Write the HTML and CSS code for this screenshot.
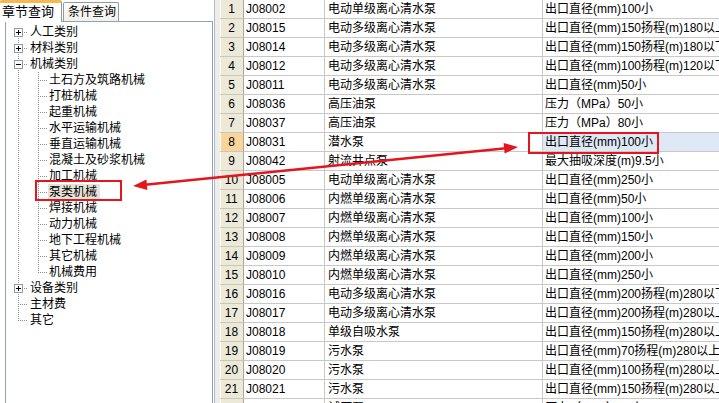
FILE: index.html
```html
<!DOCTYPE html>
<html lang="zh-CN">
<head>
  <meta charset="UTF-8">
  <title>机械类别 - 泵类机械</title>
  <link rel="stylesheet" href="styles.css">
</head>
<body>
  <div class="app">
    <!-- 左侧：章节树 -->
    <div class="side">
      <div class="tabs">
        <div class="tab active">章节查询</div>
        <div class="tab">条件查询</div>
      </div>
      <div class="tree-box">
        <div class="node"><span class="g g1 first"><svg class="exp" width="9" height="9" viewBox="0 0 9 9"><rect x=".5" y=".5" width="8" height="8" fill="#fff" stroke="#919b9c"/><path d="M2 4.5h5M4.5 2v5" stroke="#000"/></svg></span><span class="label">人工类别</span></div>
        <div class="node"><span class="g g1 tee"><svg class="exp" width="9" height="9" viewBox="0 0 9 9"><rect x=".5" y=".5" width="8" height="8" fill="#fff" stroke="#919b9c"/><path d="M2 4.5h5M4.5 2v5" stroke="#000"/></svg></span><span class="label">材料类别</span></div>
        <div class="node"><span class="g g1 tee"><svg class="exp" width="9" height="9" viewBox="0 0 9 9"><rect x=".5" y=".5" width="8" height="8" fill="#fff" stroke="#919b9c"/><path d="M2 4.5h5" stroke="#000"/></svg></span><span class="label">机械类别</span></div>
        <div class="node sub"><span class="g g1 line"></span><span class="g g2 tee"></span><span class="label">土石方及筑路机械</span></div>
        <div class="node sub"><span class="g g1 line"></span><span class="g g2 tee"></span><span class="label">打桩机械</span></div>
        <div class="node sub"><span class="g g1 line"></span><span class="g g2 tee"></span><span class="label">起重机械</span></div>
        <div class="node sub"><span class="g g1 line"></span><span class="g g2 tee"></span><span class="label">水平运输机械</span></div>
        <div class="node sub"><span class="g g1 line"></span><span class="g g2 tee"></span><span class="label">垂直运输机械</span></div>
        <div class="node sub"><span class="g g1 line"></span><span class="g g2 tee"></span><span class="label">混凝土及砂浆机械</span></div>
        <div class="node sub"><span class="g g1 line"></span><span class="g g2 tee"></span><span class="label">加工机械</span></div>
        <div class="node sub"><span class="g g1 line"></span><span class="g g2 tee"></span><span class="label selected">泵类机械</span></div>
        <div class="node sub"><span class="g g1 line"></span><span class="g g2 tee"></span><span class="label">焊接机械</span></div>
        <div class="node sub"><span class="g g1 line"></span><span class="g g2 tee"></span><span class="label">动力机械</span></div>
        <div class="node sub"><span class="g g1 line"></span><span class="g g2 tee"></span><span class="label">地下工程机械</span></div>
        <div class="node sub"><span class="g g1 line"></span><span class="g g2 tee"></span><span class="label">其它机械</span></div>
        <div class="node sub"><span class="g g1 line"></span><span class="g g2 end"></span><span class="label">机械费用</span></div>
        <div class="node"><span class="g g1 tee"><svg class="exp" width="9" height="9" viewBox="0 0 9 9"><rect x=".5" y=".5" width="8" height="8" fill="#fff" stroke="#919b9c"/><path d="M2 4.5h5M4.5 2v5" stroke="#000"/></svg></span><span class="label">设备类别</span></div>
        <div class="node"><span class="g g1 tee"></span><span class="label">主材费</span></div>
        <div class="node"><span class="g g1 end"></span><span class="label">其它</span></div>
      </div>
    </div>

    <div class="split"></div>

    <!-- 右侧：定额列表 -->
    <div class="grid-wrap">
      <div class="row"><div class="c num">1</div><div class="c code">J08002</div><div class="c name">电动单级离心清水泵</div><div class="c desc">出口直径(mm)100小</div></div>
      <div class="row"><div class="c num">2</div><div class="c code">J08015</div><div class="c name">电动多级离心清水泵</div><div class="c desc">出口直径(mm)150扬程(m)180以上</div></div>
      <div class="row"><div class="c num">3</div><div class="c code">J08014</div><div class="c name">电动多级离心清水泵</div><div class="c desc">出口直径(mm)150扬程(m)180以下</div></div>
      <div class="row"><div class="c num">4</div><div class="c code">J08012</div><div class="c name">电动多级离心清水泵</div><div class="c desc">出口直径(mm)100扬程(m)120以下</div></div>
      <div class="row"><div class="c num">5</div><div class="c code">J08011</div><div class="c name">电动多级离心清水泵</div><div class="c desc">出口直径(mm)50小</div></div>
      <div class="row"><div class="c num">6</div><div class="c code">J08036</div><div class="c name">高压油泵</div><div class="c desc">压力（MPa）50小</div></div>
      <div class="row"><div class="c num">7</div><div class="c code">J08037</div><div class="c name">高压油泵</div><div class="c desc">压力（MPa）80小</div></div>
      <div class="row current"><div class="c num">8</div><div class="c code">J08031</div><div class="c name">潜水泵</div><div class="c desc">出口直径(mm)100小</div></div>
      <div class="row"><div class="c num">9</div><div class="c code">J08042</div><div class="c name">射流井点泵</div><div class="c desc">最大抽吸深度(m)9.5小</div></div>
      <div class="row"><div class="c num">10</div><div class="c code">J08005</div><div class="c name">电动单级离心清水泵</div><div class="c desc">出口直径(mm)250小</div></div>
      <div class="row"><div class="c num">11</div><div class="c code">J08006</div><div class="c name">内燃单级离心清水泵</div><div class="c desc">出口直径(mm)50小</div></div>
      <div class="row"><div class="c num">12</div><div class="c code">J08007</div><div class="c name">内燃单级离心清水泵</div><div class="c desc">出口直径(mm)100小</div></div>
      <div class="row"><div class="c num">13</div><div class="c code">J08008</div><div class="c name">内燃单级离心清水泵</div><div class="c desc">出口直径(mm)150小</div></div>
      <div class="row"><div class="c num">14</div><div class="c code">J08009</div><div class="c name">内燃单级离心清水泵</div><div class="c desc">出口直径(mm)200小</div></div>
      <div class="row"><div class="c num">15</div><div class="c code">J08010</div><div class="c name">内燃单级离心清水泵</div><div class="c desc">出口直径(mm)250小</div></div>
      <div class="row"><div class="c num">16</div><div class="c code">J08016</div><div class="c name">电动多级离心清水泵</div><div class="c desc">出口直径(mm)200扬程(m)280以下</div></div>
      <div class="row"><div class="c num">17</div><div class="c code">J08017</div><div class="c name">电动多级离心清水泵</div><div class="c desc">出口直径(mm)200扬程(m)280以上</div></div>
      <div class="row"><div class="c num">18</div><div class="c code">J08018</div><div class="c name">单级自吸水泵</div><div class="c desc">出口直径(mm)150扬程(m)280以上</div></div>
      <div class="row"><div class="c num">19</div><div class="c code">J08019</div><div class="c name">污水泵</div><div class="c desc">出口直径(mm)70扬程(m)280以上小</div></div>
      <div class="row"><div class="c num">20</div><div class="c code">J08020</div><div class="c name">污水泵</div><div class="c desc">出口直径(mm)100扬程(m)280以上</div></div>
      <div class="row"><div class="c num">21</div><div class="c code">J08021</div><div class="c name">污水泵</div><div class="c desc">出口直径(mm)150扬程(m)280以上</div></div>
      <div class="row"><div class="c num">22</div><div class="c code">J08038</div><div class="c name">试压泵</div><div class="c desc">压力（MPa）25小</div></div>
    </div>

    <!-- 红色标注 -->
    <svg class="marks" width="719" height="403" viewBox="0 0 719 403">
      <rect x="36" y="181" width="85" height="19" fill="none" stroke="#e3161e" stroke-width="2"/>
      <rect x="529" y="133" width="129" height="20" fill="none" stroke="#e3161e" stroke-width="2"/>
      <line x1="145" y1="184.8" x2="506" y2="148.2" stroke="#e3161e" stroke-width="2.5"/>
      <polygon points="133,186 147.4,190 146.4,179.4" fill="#e3161e"/>
      <polygon points="518,147 503.6,143 504.6,153.6" fill="#e3161e"/>
    </svg>
  </div>
</body>
</html>
```

FILE: styles.css
```css
/* 全局 */
* {
  box-sizing: border-box;
  margin: 0;
  padding: 0;
}

body {
  background-color: #fff;
  color: #000;
  font-family: 'Liberation Sans', 'Noto Sans CJK SC', sans-serif;
  font-size: 12px;
  overflow: hidden;
}

.app {
  position: relative;
  display: flex;
  width: 719px;
  height: 403px;
  overflow: hidden;
}

/* 左侧面板 */
.side {
  flex: none;
  width: 215px;
  display: flex;
  flex-direction: column;
  border-right: 1px solid #a9bcd3;
}

.tabs {
  display: flex;
  align-items: flex-end;
  height: 21px;
}

.tab {
  height: 19px;
  width: 56px;
  margin-left: 1px;
  padding-left: 4px;
  line-height: 18px;
  border: 1px solid #919b9c;
  border-bottom: none;
  border-radius: 2px 2px 0 0;
  background: linear-gradient(#fefefe, #f1f0ea);
}

.tab.active {
  position: relative;
  z-index: 1;
  width: 62px;
  height: 22px;
  margin: 0 0 -1px 0;
  padding-left: 2px;
  line-height: 17px;
  font-size: 13px;
  border-left: none;
  border-top: 3px solid #f6b94d;
  background: #fff;
}

.tree-box {
  flex: 1;
  margin: 0 1px 0 5px;
  padding-top: 2px;
  border: 1px solid #8ea3b8;
  border-bottom: none;
  background: #fff;
}

/* 树节点 */
.node {
  display: flex;
  height: 16px;
  line-height: 16px;
  white-space: nowrap;
}

.label {
  margin-left: 1px;
  padding: 0 3px 0 1px;
}

.sub .label {
  margin-left: 0;
}

.label.selected {
  background-color: #e6e4da;
}

/* 连接虚线 */
.g {
  --v: repeating-linear-gradient(to bottom, #8a8a8a 0 1px, transparent 1px 2px);
  --h: repeating-linear-gradient(to right, #8a8a8a 0 1px, transparent 1px 2px);
  flex: none;
  height: 16px;
  background-repeat: no-repeat;
}

.g1 { width: 22px; }
.g2 { width: 20px; }

.g1.line { background-image: var(--v); background-size: 1px 16px; background-position: 12px 0; }
.g1.tee { background-image: var(--v), var(--h); background-size: 1px 16px, 10px 1px; background-position: 12px 0, 12px 8px; }
.g1.end { background-image: var(--v), var(--h); background-size: 1px 9px, 10px 1px; background-position: 12px 0, 12px 8px; }
.g1.first { background-image: var(--v), var(--h); background-size: 1px 8px, 10px 1px; background-position: 12px 8px, 12px 8px; }

.g2.tee { background-image: var(--v), var(--h); background-size: 1px 16px, 10px 1px; background-position: 10px 0, 10px 8px; }
.g2.end { background-image: var(--v), var(--h); background-size: 1px 9px, 10px 1px; background-position: 10px 0, 10px 8px; }

.exp {
  display: block;
  margin: 4px 0 0 8px;
}

.split {
  flex: none;
  width: 5px;
  background-color: #efeee6;
}

/* 列表 */
.grid-wrap {
  flex: 1;
  overflow: hidden;
}

.row {
  display: grid;
  grid-template-columns: 24px 81px 218px 240px;
  height: 19px;
}

.c {
  height: 19px;
  line-height: 18px;
  padding-left: 2px;
  white-space: nowrap;
  overflow: hidden;
  border-right: 1px solid #c8c8c8;
  border-bottom: 1px solid #c8c8c8;
}

.c.num {
  padding-left: 0;
  text-align: center;
  background-color: #ece9d8;
  border-right-color: #aca899;
  border-bottom-color: #cbc7b8;
  box-shadow: inset 1px 0 #fff;
}

.c.name {
  padding-left: 3px;
}

.row.current .num {
  background-color: #f9d49b;
}

.row.current .desc {
  background-color: #dfe8f5;
}

/* 标注层 */
.marks {
  position: absolute;
  top: 0;
  left: 0;
  pointer-events: none;
}
```
